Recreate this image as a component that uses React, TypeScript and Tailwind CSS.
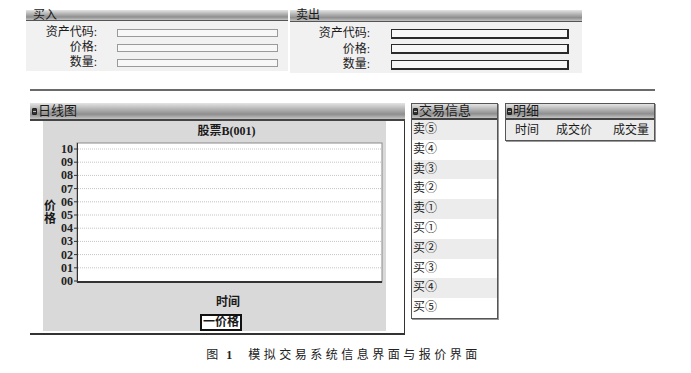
import React from "react";

const hdr =
  "bg-[linear-gradient(to_bottom,#e4e4e4_0%,#b8b8b8_35%,#8e8e8e_70%,#c4c4c4_100%)]";

function Icon() {
  return (
    <span className="inline-block w-[5px] h-[7px] bg-[#333] rounded-[1px] border border-[#222] mr-[1px] relative top-[0px]">
      <span className="block mx-auto mt-[2px] w-[3px] h-[1px] bg-[#bbb]" />
    </span>
  );
}

const ticks = ["10", "09", "08", "07", "06", "05", "04", "03", "02", "01", "00"];

function Chart() {
  return (
    <svg width="326" height="143" className="block overflow-visible">
      <rect x="20" y="2" width="305" height="139" fill="#ffffff" stroke="#8a8a8a" strokeWidth="1" />
      {ticks.map((t, i) => {
        const y = 8 + i * 13.2;
        return (
          <g key={t}>
            {i < 10 && (
              <line x1="21" x2="324" y1={y} y2={y} stroke="#c4c4c4" strokeWidth="1" strokeDasharray="1 1" />
            )}
            <line x1="17" x2="20" y1={y} y2={y} stroke="#333" strokeWidth="1" />
            <text
              x="16"
              y={y + 4}
              textAnchor="end"
              fontSize="12"
              fontWeight="bold"
              fill="#222"
              fontFamily="'Liberation Serif', serif"
            >
              {t}
            </text>
          </g>
        );
      })}
      <line x1="20.5" x2="20.5" y1="2" y2="141" stroke="#333" strokeWidth="1" />
      <line x1="20" x2="325" y1="141" y2="141" stroke="#333" strokeWidth="2" />
    </svg>
  );
}

export default function App() {
  const buyRows = ["资产代码:", "价格:", "数量:"];
  const tradeRows = ["卖⑤", "卖④", "卖③", "卖②", "卖①", "买①", "买②", "买③", "买④", "买⑤"];
  return (
    <div className="w-[691px] h-[373px] bg-white overflow-hidden text-[#1a1a1a] font-['Liberation_Serif','Noto_Sans_CJK_SC',serif]">
      {/* top */}
      <div className="flex items-start pt-[10px] pl-[26px]">
        <div className="w-[262px]">
          <div className={`h-[11px] ${hdr} border-b border-[#555] text-[12px] leading-[10px] pl-[7px]`}>买入</div>
          <div className="bg-[#f1f1f1] h-[50px] pt-[4px]">
            {buyRows.map((l) => (
              <div key={l} className="flex items-center h-[15px]">
                <div className="w-[71px] text-right text-[12px] leading-[15px]">{l}</div>
                <div className="ml-[20px] w-[161px] h-[8px] border border-[#9a9a9a] bg-[#f7f7f7]" />
              </div>
            ))}
          </div>
        </div>
        <div className="ml-[2px] w-[292px]">
          <div className={`h-[12px] ${hdr} border-b border-[#555] text-[12px] leading-[11px] pl-[6px]`}>卖出</div>
          <div className="bg-[#f1f1f1] h-[51px] pt-[4px]">
            {buyRows.map((l) => (
              <div key={l} className="flex items-center h-[15.5px]">
                <div className="w-[80px] text-right text-[12px] leading-[15px]">{l}</div>
                <div className="ml-[21px] w-[178px] h-[10px] border border-[#2a2a2a] border-r-2 border-b-2 bg-[#f7f7f7]" />
              </div>
            ))}
          </div>
        </div>
      </div>
      <div className="ml-[30px] mt-[16px] w-[625px] h-[2px] bg-[#6a6a6a]" />

      {/* bottom */}
      <div className="flex items-start pl-[30px] mt-[12px]">
        <div className="w-[375px]">
          <div className={`h-[18px] ${hdr} border-b-2 border-[#444] flex items-center pl-[2px] text-[13px] leading-[16px]`}>
            <Icon />
            日线图
          </div>
          <div className="flex border-r border-b-2 border-[#333] pl-[13px] pr-[18px] pb-[2px]">
            <div className="w-[343px] h-[210px] bg-[#d9d9d9] flex flex-col">
              <div className="pt-[2px] h-[20px] pl-[24px] text-center text-[12px] leading-[16px] font-bold">股票B(001)</div>
              <div className="flex items-center h-[143px]">
                <div className="w-[14px] pl-[1px] text-[12px] leading-[13px] font-bold flex flex-col">
                  <span>价</span>
                  <span>格</span>
                </div>
                <Chart />
              </div>
              <div className="mt-[10px] pl-[27px] text-center text-[12px] leading-[16px] font-bold">时间</div>
              <div className="mt-[4px] pl-[13px] flex justify-center">
                <div className="h-[17px] px-[1px] border-2 border-[#111] bg-white text-[12px] leading-[13px] font-bold">一价格</div>
              </div>
            </div>
          </div>
        </div>

        <div className="ml-[6px] w-[87px] border border-[#555] shadow-[1px_1px_0_#999]">
          <div className={`h-[16px] ${hdr} border-b-2 border-[#444] flex items-center pl-[1px] text-[13px] leading-[14px]`}>
            <Icon />
            交易信息
          </div>
          {tradeRows.map((r, i) => (
            <div
              key={r}
              className={`h-[19.8px] pl-[1px] text-[12px] leading-[19px] ${i % 2 === 0 ? "bg-[#ececec]" : "bg-white"}`}
            >
              {r}
            </div>
          ))}
        </div>

        <div className="ml-[7px] w-[150px] border border-[#555] shadow-[1px_1px_0_#999]">
          <div className={`h-[16px] ${hdr} border-b-2 border-[#444] flex items-center pl-[1px] text-[13px] leading-[14px]`}>
            <Icon />
            明细
          </div>
          <div className="h-[20px] bg-[#ececec] flex items-center text-[12px] leading-[16px]">
            <span className="ml-[9px]">时间</span>
            <span className="ml-[17px]">成交价</span>
            <span className="ml-[21px]">成交量</span>
          </div>
        </div>
      </div>

      <div className="mt-[12px] flex justify-center pr-[4px] text-[12px] leading-[16px] text-[#222]">
        <span>图</span>
        <span className="ml-[8px] font-bold">1</span>
        <span className="ml-[16px] tracking-[3.5px]">模拟交易系统信息界面与报价界面</span>
      </div>
    </div>
  );
}
